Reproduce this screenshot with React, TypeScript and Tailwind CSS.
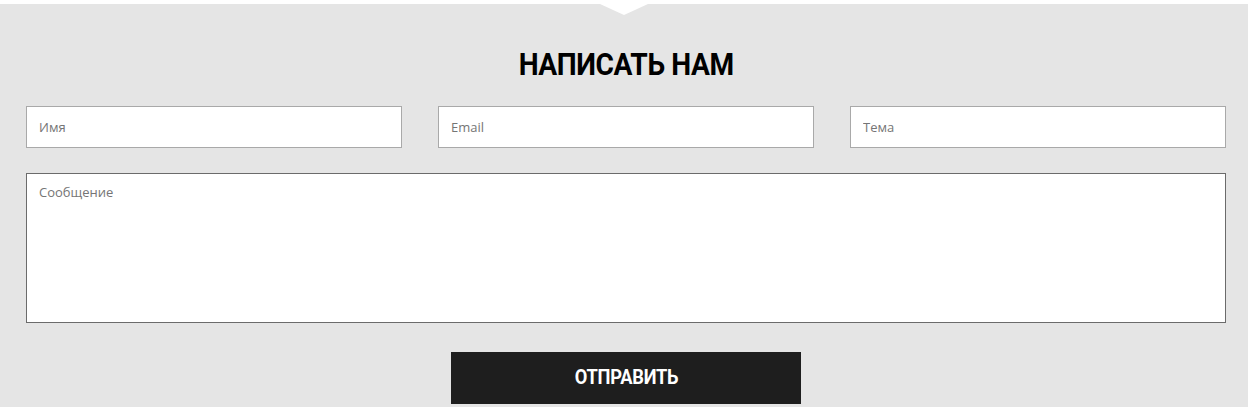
// Contact form section ("Написать нам")

export default function App() {
  return (
    <div className="relative min-h-[407px] w-full bg-[#e5e5e5] font-['Roboto',sans-serif]">
      {/* top white strip with notch */}
      <div className="h-[4px] bg-white" />
      <div className="absolute left-[600px] top-[4px] h-0 w-0 border-x-[24px] border-t-[11px] border-x-transparent border-t-white" />

      <form className="pl-[26px] pr-[22px]" onSubmit={(e) => e.preventDefault()}>
        <h2 className="pt-[40px] text-center text-[32px] font-bold leading-[40px] tracking-[-0.5px] text-black">
          <span className="inline-block scale-x-[0.88]">НАПИСАТЬ НАМ</span>
        </h2>

        <div className="mt-[22px] grid grid-cols-3 gap-[36px]">
          {['Имя', 'Email', 'Тема'].map((p) => (
            <input
              key={p}
              type="text"
              placeholder={p}
              className="h-[42px] border border-[#a9a9a9] bg-white px-[12px] font-['Open_Sans',sans-serif] text-[13px] text-[#333] outline-none placeholder:text-[#757575]"
            />
          ))}
        </div>

        <textarea
          placeholder="Сообщение"
          className="mt-[25px] block h-[150px] w-full resize-none border border-[#6b6b6b] bg-white px-[12px] py-[9px] font-['Open_Sans',sans-serif] text-[13px] text-[#333] outline-none placeholder:text-[#757575]"
        />

        <div className="mt-[29px] flex justify-center">
          <button
            type="submit"
            className="h-[52px] w-[350px] bg-[#1e1e1e] text-[21px] font-bold tracking-[-0.3px] text-white"
          >
            <span className="inline-block scale-x-[0.87]">ОТПРАВИТЬ</span>
          </button>
        </div>
      </form>
    </div>
  )
}
